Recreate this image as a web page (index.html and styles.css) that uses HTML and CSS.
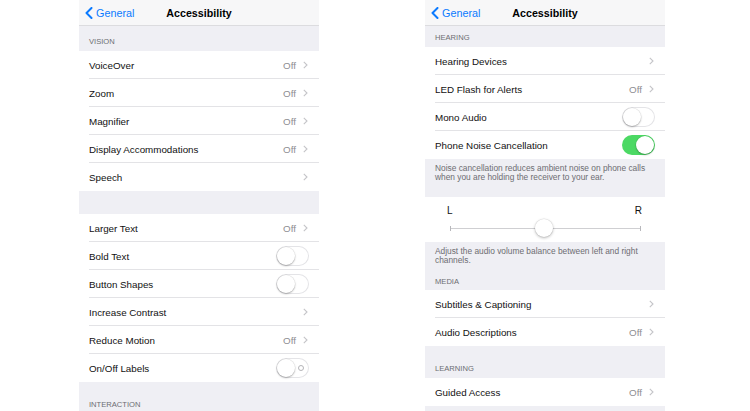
FILE: index.html
```html
<!DOCTYPE html>
<html>
<head>
<meta charset="utf-8">
<link rel="stylesheet" href="styles.css">
</head>
<body>
<div class="stage">
  <div class="phone">
    <div class="nav">
      <div class="back"><svg class="back-icon" viewBox="0 0 8 12"><path d="M6.5 1 L1.5 6 L6.5 11"/></svg>General</div>
      <div class="title">Accessibility</div>
      <div></div>
    </div>
    <div class="hdr h25">VISION</div>
    <div class="group">
      <div class="row"><span class="label">VoiceOver</span><span class="detail">Off</span><svg class="chev" viewBox="0 0 5 8"><path d="M0.8 0.8 L4 4 L0.8 7.2"/></svg></div>
      <div class="row"><span class="label">Zoom</span><span class="detail">Off</span><svg class="chev" viewBox="0 0 5 8"><path d="M0.8 0.8 L4 4 L0.8 7.2"/></svg></div>
      <div class="row"><span class="label">Magnifier</span><span class="detail">Off</span><svg class="chev" viewBox="0 0 5 8"><path d="M0.8 0.8 L4 4 L0.8 7.2"/></svg></div>
      <div class="row"><span class="label">Display Accommodations</span><span class="detail">Off</span><svg class="chev" viewBox="0 0 5 8"><path d="M0.8 0.8 L4 4 L0.8 7.2"/></svg></div>
      <div class="row"><span class="label">Speech</span><svg class="chev" viewBox="0 0 5 8"><path d="M0.8 0.8 L4 4 L0.8 7.2"/></svg></div>
    </div>
    <div class="gap23"></div>
    <div class="group">
      <div class="row"><span class="label">Larger Text</span><span class="detail">Off</span><svg class="chev" viewBox="0 0 5 8"><path d="M0.8 0.8 L4 4 L0.8 7.2"/></svg></div>
      <div class="row"><span class="label">Bold Text</span><span class="switch"><span class="knob"></span></span></div>
      <div class="row"><span class="label">Button Shapes</span><span class="switch"><span class="knob"></span></span></div>
      <div class="row"><span class="label">Increase Contrast</span><svg class="chev" viewBox="0 0 5 8"><path d="M0.8 0.8 L4 4 L0.8 7.2"/></svg></div>
      <div class="row"><span class="label">Reduce Motion</span><span class="detail">Off</span><svg class="chev" viewBox="0 0 5 8"><path d="M0.8 0.8 L4 4 L0.8 7.2"/></svg></div>
      <div class="row"><span class="label">On/Off Labels</span><span class="switch"><span class="knob"></span><span class="olabel"></span></span></div>
    </div>
    <div class="hdr h35">INTERACTION</div>
  </div>

  <div class="phone">
    <div class="nav">
      <div class="back"><svg class="back-icon" viewBox="0 0 8 12"><path d="M6.5 1 L1.5 6 L6.5 11"/></svg>General</div>
      <div class="title">Accessibility</div>
      <div></div>
    </div>
    <div class="hdr h21">HEARING</div>
    <div class="group">
      <div class="row"><span class="label">Hearing Devices</span><svg class="chev" viewBox="0 0 5 8"><path d="M0.8 0.8 L4 4 L0.8 7.2"/></svg></div>
      <div class="row"><span class="label">LED Flash for Alerts</span><span class="detail">Off</span><svg class="chev" viewBox="0 0 5 8"><path d="M0.8 0.8 L4 4 L0.8 7.2"/></svg></div>
      <div class="row"><span class="label">Mono Audio</span><span class="switch"><span class="knob"></span></span></div>
      <div class="row"><span class="label">Phone Noise Cancellation</span><span class="switch on"><span class="knob"></span></span></div>
    </div>
    <div class="foot f38">Noise cancellation reduces ambient noise on phone calls when you are holding the receiver to your ear.</div>
    <div class="balance">
      <div class="lr"><span>L</span><span>R</span></div>
      <div class="track"><span class="thumb"></span></div>
    </div>
    <div class="foot f26">Adjust the audio volume balance between left and right channels.</div>
    <div class="hdr h22">MEDIA</div>
    <div class="group">
      <div class="row"><span class="label">Subtitles &amp; Captioning</span><svg class="chev" viewBox="0 0 5 8"><path d="M0.8 0.8 L4 4 L0.8 7.2"/></svg></div>
      <div class="row"><span class="label">Audio Descriptions</span><span class="detail">Off</span><svg class="chev" viewBox="0 0 5 8"><path d="M0.8 0.8 L4 4 L0.8 7.2"/></svg></div>
    </div>
    <div class="hdr h32">LEARNING</div>
    <div class="group">
      <div class="row"><span class="label">Guided Access</span><span class="detail">Off</span><svg class="chev" viewBox="0 0 5 8"><path d="M0.8 0.8 L4 4 L0.8 7.2"/></svg></div>
    </div>
  </div>
</div>
</body>
</html>
```

FILE: styles.css
```css
html, body {
  margin: 0;
  padding: 0;
  background: #ffffff;
}
body {
  font-family: "Liberation Sans", Arial, sans-serif;
  color: #111;
}
.stage {
  display: flex;
  gap: 106px;
  padding-left: 79px;
  height: 411px;
  overflow: hidden;
}
.phone {
  width: 240px;
  height: 411px;
  overflow: hidden;
  background: #efeff4;
  display: flex;
  flex-direction: column;
  flex-shrink: 0;
}
.nav {
  height: 25px;
  flex-shrink: 0;
  border-bottom: 1px solid #dcdcdf;
  background: #f7f7f8;
  display: grid;
  grid-template-columns: 1fr auto 1fr;
  align-items: center;
}
.back {
  display: flex;
  align-items: center;
  padding-left: 6px;
  color: #0a7aff;
  font-size: 10.8px;
}
.back-icon {
  width: 8px;
  height: 12px;
  margin-right: 3px;
  fill: none;
  stroke: #0a7aff;
  stroke-width: 2;
  stroke-linecap: round;
  stroke-linejoin: round;
}
.title {
  font-weight: bold;
  font-size: 10.7px;
  color: #000;
}
.hdr {
  flex-shrink: 0;
  box-sizing: border-box;
  display: flex;
  align-items: flex-end;
  padding: 0 10px 5px;
  font-size: 7.6px;
  line-height: 9px;
  color: #6d6d72;
}
.h21 { height: 21px; }
.h22 { height: 22px; padding-bottom: 4px; }
.h25 { height: 25px; }
.h32 { height: 32px; }
.h35 { height: 35px; padding-bottom: 8px; }
.gap23 {
  height: 23px;
  flex-shrink: 0;
}
.group {
  background: #fff;
  flex-shrink: 0;
}
.row {
  position: relative;
  height: 28px;
  display: flex;
  align-items: center;
  padding: 0 10px 0 10px;
  font-size: 9.8px;
}
.row::after {
  content: "";
  position: absolute;
  left: 10px;
  right: 0;
  bottom: 0;
  height: 1px;
  background: #e3e3e6;
}
.row:last-child::after {
  display: none;
}
.label {
  flex: 1;
  color: #111;
}
.detail {
  color: #8e8e93;
  margin-right: 7px;
}
.chev {
  width: 5px;
  height: 8px;
  margin-right: 1px;
  fill: none;
  stroke: #c4c4c8;
  stroke-width: 1.1;
}
.switch {
  position: relative;
  box-sizing: border-box;
  width: 33px;
  height: 20px;
  border-radius: 10px;
  background: #fff;
  box-shadow: inset 0 0 0 1px #e4e4e7;
  display: flex;
  align-items: center;
  padding: 0 1px;
}
.switch.on {
  background: #4cd964;
  box-shadow: none;
  justify-content: flex-end;
}
.knob {
  width: 18px;
  height: 18px;
  border-radius: 50%;
  background: #fff;
  box-shadow: 0 1px 2px rgba(0, 0, 0, 0.28), 0 0 0 0.5px rgba(0, 0, 0, 0.08);
}
.olabel {
  width: 4px;
  height: 4px;
  border-radius: 50%;
  border: 1px solid #b4b4b8;
  margin-left: auto;
  margin-right: 4px;
}
.foot {
  flex-shrink: 0;
  box-sizing: border-box;
  padding: 5px 10px 0;
  font-size: 8.35px;
  line-height: 9.4px;
  color: #6d6d72;
}
.f38 { height: 38px; }
.f26 { height: 26px; }
.balance {
  flex-shrink: 0;
  box-sizing: border-box;
  height: 45px;
  background: #fff;
  padding: 8px 23px 0 22px;
}
.lr {
  display: flex;
  justify-content: space-between;
  font-size: 10px;
  line-height: 12px;
  color: #111;
}
.track {
  position: relative;
  margin: 11px 1px 0 3px;
  height: 1px;
  background: #cfcfd2;
}
.track::before,
.track::after {
  content: "";
  position: absolute;
  top: -2px;
  width: 1px;
  height: 5px;
  background: #b8b8bc;
}
.track::before { left: 0; }
.track::after { right: 0; }
.thumb {
  position: absolute;
  left: 49%;
  top: -9px;
  margin-left: -9px;
  width: 18px;
  height: 18px;
  border-radius: 50%;
  background: #fff;
  box-shadow: 0 1px 3px rgba(0, 0, 0, 0.28), 0 0 0 0.5px rgba(0, 0, 0, 0.08);
}
```
